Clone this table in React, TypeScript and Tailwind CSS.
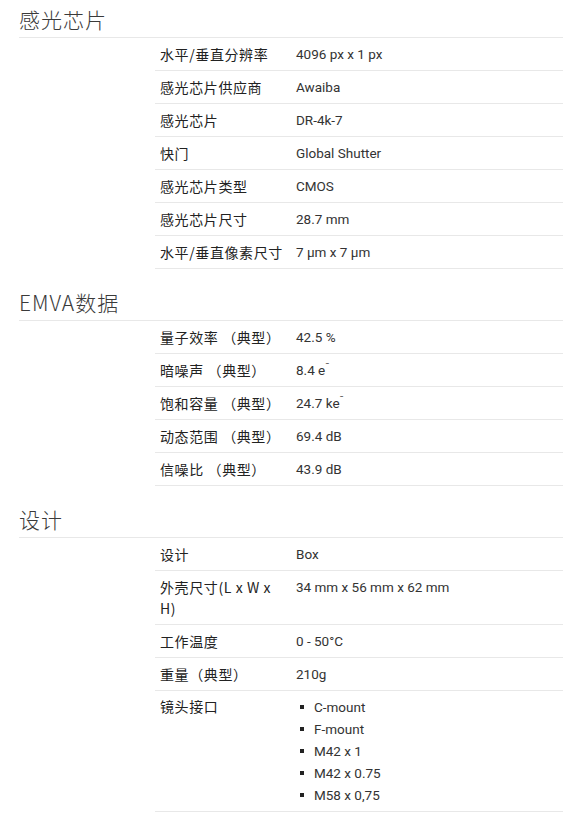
import React from 'react';

type Row = { label: React.ReactNode; value: React.ReactNode; list?: boolean };

const sup = (s: string) => <span className="relative -top-[5px] text-[9px] leading-none">{s}</span>;

const sections: { title: string; rows: Row[] }[] = [
  {
    title: '感光芯片',
    rows: [
      { label: '水平/垂直分辨率', value: '4096 px x 1 px' },
      { label: '感光芯片供应商', value: 'Awaiba' },
      { label: '感光芯片', value: 'DR-4k-7' },
      { label: '快门', value: 'Global Shutter' },
      { label: '感光芯片类型', value: 'CMOS' },
      { label: '感光芯片尺寸', value: '28.7 mm' },
      { label: '水平/垂直像素尺寸', value: '7 µm x 7 µm' },
    ],
  },
  {
    title: 'EMVA数据',
    rows: [
      { label: '量子效率 （典型）', value: '42.5 %' },
      { label: '暗噪声 （典型）', value: <>8.4 e{sup('¯')}</> },
      { label: '饱和容量 （典型）', value: <>24.7 ke{sup('¯')}</> },
      { label: '动态范围 （典型）', value: '69.4 dB' },
      { label: '信噪比 （典型）', value: '43.9 dB' },
    ],
  },
  {
    title: '设计',
    rows: [
      { label: '设计', value: 'Box' },
      { label: <>外壳尺寸(L x W x<br />H)</>, value: '34 mm x 56 mm x 62 mm' },
      { label: '工作温度', value: '0 - 50°C' },
      { label: '重量（典型）', value: '210g' },
      {
        label: '镜头接口',
        list: true,
        value: (
          <ul>
            {['C-mount', 'F-mount', 'M42 x 1', 'M42 x 0.75', 'M58 x 0,75'].map((m) => (
              <li key={m} className="flex items-center h-[22px]">
                <span className="w-[4px] h-[4px] bg-[#222] ml-[4px] mr-[10px]" />
                {m}
              </li>
            ))}
          </ul>
        ),
      },
    ],
  },
];

export default function App() {
  return (
    <div className="bg-white min-h-[821px] pl-[19px] pr-[7px] text-[#333]" style={{ fontFamily: '"Noto Sans CJK SC", sans-serif' }}>
      {sections.map((s, i) => (
        <div key={s.title} className={i === 0 ? '' : 'mt-[14px]'}>
          <h2 className="h-[38px] border-b border-[#e8e8e8] text-[21px] leading-[38px] font-light tracking-[1px] text-[#3a3a3a]">
            {s.title}
          </h2>
          <div className="ml-[136px]">
            {s.rows.map((r, j) => (
              <div key={j} className="flex border-b border-[#e8e8e8]">
                <div
                  className={`w-[141px] shrink-0 pl-[5px] leading-[21px] text-[14px] tracking-[0.6px] text-[#222] ${r.list ? 'py-[5px]' : 'pt-[6px] pb-[5px]'}`}
                >
                  {r.label}
                </div>
                <div
                  className={`flex-1 leading-[21px] text-[13.5px] text-[#333] ${r.list ? 'py-[5px]' : 'pt-[6px] pb-[5px]'}`}
                  style={{ fontFamily: 'Roboto, sans-serif' }}
                >
                  {r.value}
                </div>
              </div>
            ))}
          </div>
        </div>
      ))}
    </div>
  );
}
